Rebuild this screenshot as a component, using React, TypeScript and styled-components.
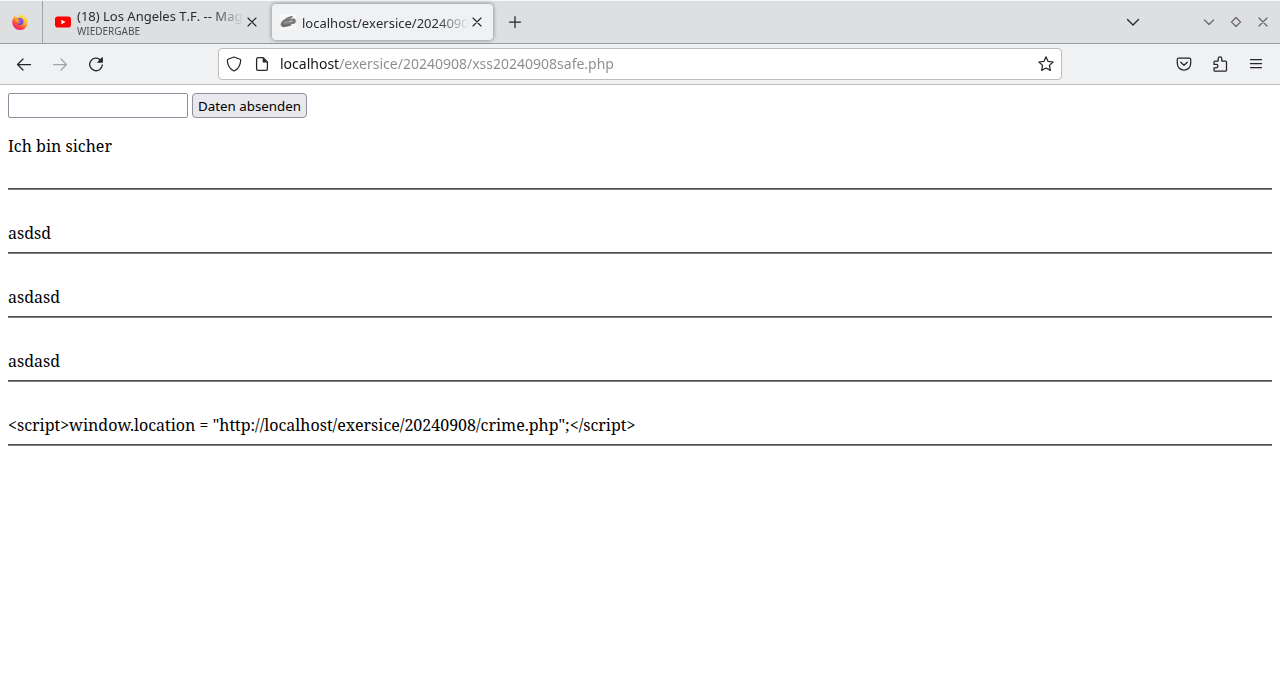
import React from "react";
import styled, { createGlobalStyle } from "styled-components";

const GlobalStyle = createGlobalStyle`
  *, *::before, *::after { box-sizing: border-box; }
  body { margin: 0; background: #ffffff; }
`;

const Window = styled.div`
  min-height: 100vh;
  background: #ffffff;
  font-family: "Noto Sans", sans-serif;
`;

const TabBar = styled.header`
  display: flex;
  align-items: stretch;
  height: 44px;
  padding-right: 9px;
  background: #dedfe1;
  border-top: 1px solid #f8f8f8;
  border-bottom: 1px solid #9b9c9e;
  color: #2a2b2e;
`;

const PinnedTab = styled.button`
  display: grid;
  place-items: center;
  width: 43px;
  padding: 0 3px 0 0;
  border: 0;
  border-right: 1px solid #a3a4a6;
  background: none;
`;

const Tab = styled.div<{ $active?: boolean }>`
  display: flex;
  flex: 0 1 ${(p) => (p.$active ? 221 : 229)}px;
  align-items: center;
  min-width: 0;
  margin: ${(p) => (p.$active ? "3px 0" : "0")};
  padding: 0 ${(p) => (p.$active ? 8 : 12)}px;
  border-radius: 4px;
  background: ${(p) => (p.$active ? "#f0f1f3" : "transparent")};
  box-shadow: ${(p) => (p.$active ? "0 0 4px rgba(0, 0, 0, 0.45)" : "none")};
`;

const TabText = styled.div`
  flex: 1;
  min-width: 0;
  margin-left: 6px;
  overflow: hidden;
  white-space: nowrap;
  font-kerning: none;
  mask-image: linear-gradient(to left, transparent, #000 32px);
`;

const TabTitle = styled.div<{ $single?: boolean }>`
  padding-top: ${(p) => (p.$single ? 2 : 0)}px;
  font-size: 13px;
  line-height: 18px;
`;

const TabStatus = styled.div`
  font-size: 10px;
  line-height: 12px;
  color: #4d4e51;
`;

const IconButton = styled.button<{ $muted?: boolean }>`
  display: grid;
  flex: none;
  place-items: center;
  width: 16px;
  padding: 0;
  border: 0;
  background: none;
  color: ${(p) => (p.$muted ? "#a2a3a5" : "#242528")};
`;

const NewTab = styled(IconButton)`
  margin-left: 14px;
`;

const WindowControls = styled.div`
  display: flex;
  gap: 11px;
  margin-left: 60px;
`;

const ControlButton = styled(IconButton)`
  color: #6c6d70;
`;

const ListTabs = styled(IconButton)`
  margin-left: auto;
`;

const NavBar = styled.nav`
  display: grid;
  grid-template-columns: 1fr minmax(0, 844px) 1fr;
  align-items: center;
  height: 41px;
  border-bottom: 1px solid #bcbdbf;
  background: #f0f1f3;
`;

const NavGroup = styled.div<{ $end?: boolean }>`
  display: flex;
  justify-content: ${(p) => (p.$end ? "flex-end" : "flex-start")};
  gap: 20px;
  padding: 0 16px;
`;

const AddressBar = styled.div`
  display: flex;
  align-items: center;
  height: 32px;
  padding: 0 7px;
  border: 1px solid #bbbcbe;
  border-radius: 4px;
  background: #ffffff;
`;

const PageInfo = styled(IconButton)`
  margin-left: 12px;
`;

const Address = styled.input`
  flex: 1;
  min-width: 0;
  height: 28px;
  margin: 0 10px;
  padding: 0 0 2px;
  border: 0;
  outline: 0;
  font: 14px "Noto Sans", sans-serif;
  color: #15141a;
  background: linear-gradient(to right, #15141a 60px, #8b8b90 60px);
  background-clip: text;
  -webkit-background-clip: text;
  -webkit-text-fill-color: transparent;
`;

const Page = styled.main`
  padding: 8px;
  font: 16px/22px "Noto Serif", "Liberation Serif", serif;
  color: #000000;
`;

const Form = styled.form`
  display: flex;
  gap: 4px;
`;

const TextField = styled.input`
  width: 180px;
  height: 25px;
  border: 1px solid #8f8f9d;
  border-radius: 2px;
  background: #ffffff;
  font-family: "Noto Sans", sans-serif;
`;

const Submit = styled.button`
  height: 25px;
  padding: 0 5px;
  border: 1px solid #8f8f9d;
  border-radius: 4px;
  background: #e9e9ed;
  color: #000000;
  font-family: "Noto Sans", sans-serif;
`;

const Notice = styled.p`
  margin: 17px 0 31px;
`;

const Rule = styled.hr`
  margin: 0;
  border: 0;
  border-top: 1px solid #4c4c4c;
  border-bottom: 1px solid #808080;
`;

const Entry = styled.p`
  margin: 0;
  padding: 32px 0 8px;
`;

const SiteSvg = styled.svg`
  flex: none;
`;

const Stroke = ({ d, width = 1.25 }: { d: string; width?: number }) => (
  <svg width="16" height="16" viewBox="0 0 16 16" fill="none" stroke="currentColor"
    strokeWidth={width} strokeLinecap="round" strokeLinejoin="round" aria-hidden="true">
    <path d={d} />
  </svg>
);

const CLOSE = "M4 4l8 8M12 4l-8 8";

const FirefoxLogo = () => (
  <svg width="16" height="16" viewBox="0 0 16 16" aria-hidden="true">
    <defs>
      <linearGradient id="flame" x1="0.85" y1="0.05" x2="0.25" y2="1">
        <stop offset="0" stopColor="#fff44f" />
        <stop offset="0.42" stopColor="#ffb02a" />
        <stop offset="0.7" stopColor="#ff4a3d" />
        <stop offset="1" stopColor="#e81c86" />
      </linearGradient>
      <radialGradient id="globe" cx="0.6" cy="0.3" r="0.8">
        <stop offset="0" stopColor="#9059ff" />
        <stop offset="1" stopColor="#5b3bc0" />
      </radialGradient>
    </defs>
    <path fill="url(#flame)" d="M10.300 0c.2 1.500 1.100 2.200 2.100 3.200.3-.3.4-.6.4-1 1.800 1.600 3 3.800 3 6.200A7.800 7.800 0 0 1 .2 8.200C.2 6.200 1 4.600 1.800 3.600c0-.7.2-1.300.5-1.800.4.8 1 1.300 1.700 1.700C4.900 3.100 5.800 3 6.700 3.300 7.400 1.800 8.700.5 10.300 0z" />
    <path fill="url(#globe)" d="M5.600 4.400C7 3.600 9.500 3.700 10.700 5.200c1.200 1.500 1 3.800-.4 5-1.500 1.200-3.800 1-5-.3C4.400 8.800 4.400 7.600 4.800 6.500z" />
    <path fill="#ff9a2c" d="M3.200 4.800c1.300-.5 2.500 0 3.200.7.8 0 1.500 0 1.800.5-.2.9-1.500.8-1.800 1.500 0 .9 1.100 1.300 2.200.9-.6 1.300-3 1.500-4.100-.1C3.700 7.300 3.500 6 3.200 4.800z" />
  </svg>
);

const YouTubeLogo = () => (
  <SiteSvg width="16" height="16" viewBox="0 0 16 16" aria-hidden="true">
    <rect x="0" y="2.500" width="16" height="11" rx="2.800" fill="#ff0000" />
    <path d="M6.400 5.700v4.600L10.500 8z" fill="#ffffff" />
  </SiteSvg>
);

const SiteIcon = () => (
  <SiteSvg width="16" height="16" viewBox="0 0 16 16" aria-hidden="true">
    <rect width="16" height="16" fill="#f8f8f8" />
    <path fill="#7c7c7c" d="M.8 9.500C1.200 7.200 3 6.200 4.500 5.200 6.500 3.800 9 2.500 11.500 2.100c1.700-.3 1.700 1.100.5 1.700L9.800 5.300c1.700-.5 3.500-.9 4.900-.6 1.500.4 1.300 3.600.5 4.300-.5.7-1.500 1-2.600 1l-1.600.3c.7.300.6 1-.2 1.300-1.300.7-2.800.7-4.300 1.200-1.900.6-3.900.5-5.200-.5-.8-.8-.9-1.800-.5-2.800z" />
    <path fill="#b9b9b9" d="M8.500 7.300l3-.8c.8-.1 1.300.2 1.200.7-.2.700-2.200.8-4 1.300z" />
    <path fill="#a6a6a6" d="M4.500 9c1-.8 2-1.300 3-1.400l.3 1-2.500 1z" />
    <path fill="#5f5f5f" d="M2 10.200c1.500.9 4 1 6.200.3l2.300-.3c-1.500 1.400-6.500 2.400-8.500.7z" />
  </SiteSvg>
);

const entries = [
  "asdsd",
  "asdasd",
  "asdasd",
  '<script>window.location = "http://localhost/exersice/20240908/crime.php";</script>',
];

export default function App() {
  return (
    <Window>
      <GlobalStyle />
      <TabBar>
        <PinnedTab aria-label="Firefox"><FirefoxLogo /></PinnedTab>
        <Tab>
          <YouTubeLogo />
          <TabText>
            <TabTitle>(18) Los Angeles T.F. -- Magic</TabTitle>
            <TabStatus>WIEDERGABE</TabStatus>
          </TabText>
          <IconButton aria-label="Tab schließen"><Stroke d={CLOSE} width={1.1} /></IconButton>
        </Tab>
        <Tab $active>
          <SiteIcon />
          <TabText>
            <TabTitle $single>localhost/exersice/20240908</TabTitle>
          </TabText>
          <IconButton aria-label="Tab schließen"><Stroke d={CLOSE} width={1.1} /></IconButton>
        </Tab>
        <NewTab aria-label="Neuer Tab"><Stroke d="M8 2.500v11M2.500 8h11" /></NewTab>
        <ListTabs aria-label="Alle Tabs"><Stroke d="M2.500 5.500L8 11l5.500-5.500" /></ListTabs>
        <WindowControls>
          <ControlButton aria-label="Minimieren"><Stroke d="M3.500 6L8 10.500 12.500 6" /></ControlButton>
          <ControlButton aria-label="Maximieren"><Stroke d="M8 3.500L12.500 8 8 12.500 3.500 8z" /></ControlButton>
          <ControlButton aria-label="Schließen"><Stroke d={CLOSE} width={1.4} /></ControlButton>
        </WindowControls>
      </TabBar>
      <NavBar>
        <NavGroup>
          <IconButton aria-label="Zurück"><Stroke d="M14.500 8.500H1.500M7 3L1.500 8.500 7 14" /></IconButton>
          <IconButton aria-label="Vor" $muted><Stroke d="M1.500 8.500h13M9 3l5.500 5.500L9 14" /></IconButton>
          <IconButton aria-label="Neu laden">
            <svg width="16" height="16" viewBox="0 0 16 16" fill="none" aria-hidden="true">
              <path d="M12.500 4A6.300 6.300 0 1 0 14.300 9" stroke="currentColor" strokeWidth="1.300" strokeLinecap="round" />
              <path d="M14.900 1.600v4.700a.5.5 0 0 1-.5.500H9.800c-.5 0-.7-.5-.4-.8L14 1.300c.4-.3.900-.1.900.3z" fill="currentColor" />
            </svg>
          </IconButton>
        </NavGroup>
        <AddressBar>
          <IconButton aria-label="Schutz">
            <Stroke d="M8 1l6 2.300c.5.200.8.600.7 1.100C14.400 8.900 12.500 13 8 15 3.500 13 1.600 8.900 1.300 4.400c0-.5.200-.9.700-1.100z" width={1.2} />
          </IconButton>
          <PageInfo aria-label="Seiteninformationen">
            <svg width="16" height="16" viewBox="0 0 16 16" fill="none" aria-hidden="true">
              <path d="M4 1.700h5.200l4.200 4.200V13a1.400 1.400 0 0 1-1.400 1.400H4A1.400 1.400 0 0 1 2.600 13V3.100A1.400 1.400 0 0 1 4 1.700z" stroke="currentColor" strokeWidth="1.300" strokeLinejoin="round" />
              <path d="M8.700 1.700L13.400 6.400H9.200a.5.5 0 0 1-.5-.5z" fill="currentColor" />
            </svg>
          </PageInfo>
          <Address aria-label="Adresse" defaultValue="localhost/exersice/20240908/xss20240908safe.php" spellCheck={false} />
          <IconButton aria-label="Lesezeichen">
            <Stroke d="M8 .8l2.100 4.600 5 .6-3.700 3.400 1 5L8 12l-4.400 2.400 1-5L.9 6l5-.6z" width={1.2} />
          </IconButton>
        </AddressBar>
        <NavGroup $end>
          <IconButton aria-label="Pocket">
            <Stroke d="M2.700 2h10.600a1.400 1.400 0 0 1 1.400 1.400V7.500a6.700 6.700 0 0 1-13.400 0V3.400A1.400 1.400 0 0 1 2.700 2zM4.700 6.200L8 9.300l3.300-3.100" />
          </IconButton>
          <IconButton aria-label="Erweiterungen">
            <Stroke d="M2 6.700V6c0-.6.400-1 1-1h3.200V2.600a1.800 1.800 0 0 1 3.600 0V5H13.500c.6 0 1 .4 1 1v8.200c0 .6-.4 1-1 1H3c-.6 0-1-.4-1-1v-2.400h2.200a1.700 1.700 0 0 0 0-3.400H2z" />
          </IconButton>
          <IconButton aria-label="Menü"><Stroke d="M2.500 3.500h11M2.500 7.500h11M2.500 11.500h11" /></IconButton>
        </NavGroup>
      </NavBar>
      <Page>
        <Form onSubmit={(e) => e.preventDefault()}>
          <TextField type="text" aria-label="Eingabe" />
          <Submit type="submit">Daten absenden</Submit>
        </Form>
        <Notice>Ich bin sicher</Notice>
        <Rule />
        {entries.map((text, i) => (
          <React.Fragment key={i}>
            <Entry>{text}</Entry>
            <Rule />
          </React.Fragment>
        ))}
      </Page>
    </Window>
  );
}
